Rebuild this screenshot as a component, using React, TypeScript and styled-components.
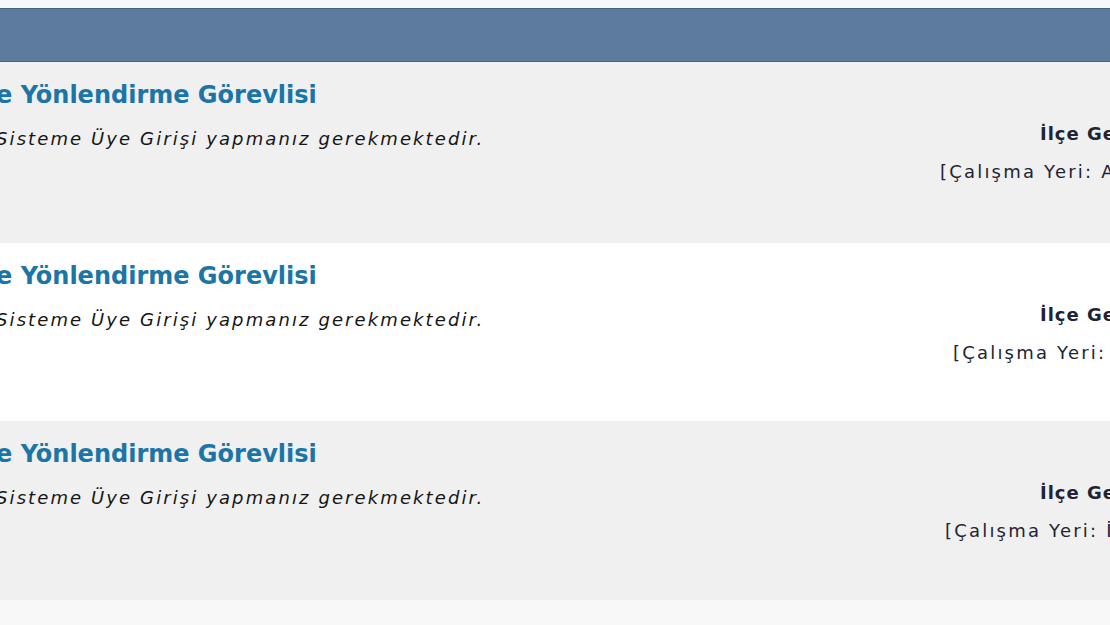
import React from "react";
import styled, { createGlobalStyle } from "styled-components";

const Global = createGlobalStyle`
  html, body { margin: 0; padding: 0; background: #f8f8f8; }
  body { width: 1110px; height: 625px; overflow: hidden; font-family: "DejaVu Sans", Verdana, sans-serif; }
`;

const Page = styled.div`
  display: flex;
  flex-direction: column;
  padding-top: 8px;
  width: 1110px;
  overflow: hidden;
`;

const HeaderBar = styled.div`
  height: 52px;
  background: #5d7b9d;
  border-top: 1px solid #4b6382;
  border-bottom: 1px solid #4b6382;
`;

const Row = styled.div<{ $alt: boolean; $h: number }>`
  display: flex;
  justify-content: space-between;
  height: ${(p) => p.$h}px;
  background: ${(p) => (p.$alt ? "#f0f0f0" : "#ffffff")};
  overflow: hidden;
`;

const LeftCell = styled.div`
  display: flex;
  flex-direction: column;
  padding-top: 19px;
  margin-left: -4px;
`;

const Title = styled.div`
  font-weight: bold;
  font-size: 24px;
  line-height: 28px;
  color: #1b75a6;
  white-space: nowrap;
`;

const Note = styled.div`
  margin-top: 19px;
  font-style: italic;
  font-size: 18px;
  line-height: 22px;
  letter-spacing: 2.1px;
  color: #151515;
  white-space: nowrap;
`;

const RightCell = styled.div`
  display: flex;
  flex-direction: column;
  padding-top: 61px;
  width: 180px;
  flex-shrink: 0;
  overflow: hidden;
`;

const Unit = styled.div<{ $indent: number }>`
  font-weight: bold;
  font-size: 18px;
  line-height: 22px;
  letter-spacing: 1px;
  color: #1e2433;
  white-space: nowrap;
  padding-left: ${(p) => p.$indent}px;
`;

const Place = styled.div<{ $indent: number }>`
  margin-top: 16px;
  font-size: 18px;
  line-height: 22px;
  letter-spacing: 2.2px;
  color: #1e2433;
  white-space: nowrap;
  padding-left: ${(p) => p.$indent}px;
`;

const rows = [
  { h: 181, alt: true, unitIndent: 110, placeIndent: 10, place: "[Çalışma Yeri: A" },
  { h: 178, alt: false, unitIndent: 110, placeIndent: 23, place: "[Çalışma Yeri: İ" },
  { h: 179, alt: true, unitIndent: 110, placeIndent: 15, place: "[Çalışma Yeri: İ" },
];

export default function App() {
  return (
    <Page>
      <Global />
      <HeaderBar />
      {rows.map((r, i) => (
        <Row key={i} $alt={r.alt} $h={r.h}>
          <LeftCell>
            <Title>e Yönlendirme Görevlisi</Title>
            <Note>Sisteme Üye Girişi yapmanız gerekmektedir.</Note>
          </LeftCell>
          <RightCell>
            <Unit $indent={r.unitIndent}>İlçe Gençlik</Unit>
            <Place $indent={r.placeIndent}>{r.place}</Place>
          </RightCell>
        </Row>
      ))}
    </Page>
  );
}
